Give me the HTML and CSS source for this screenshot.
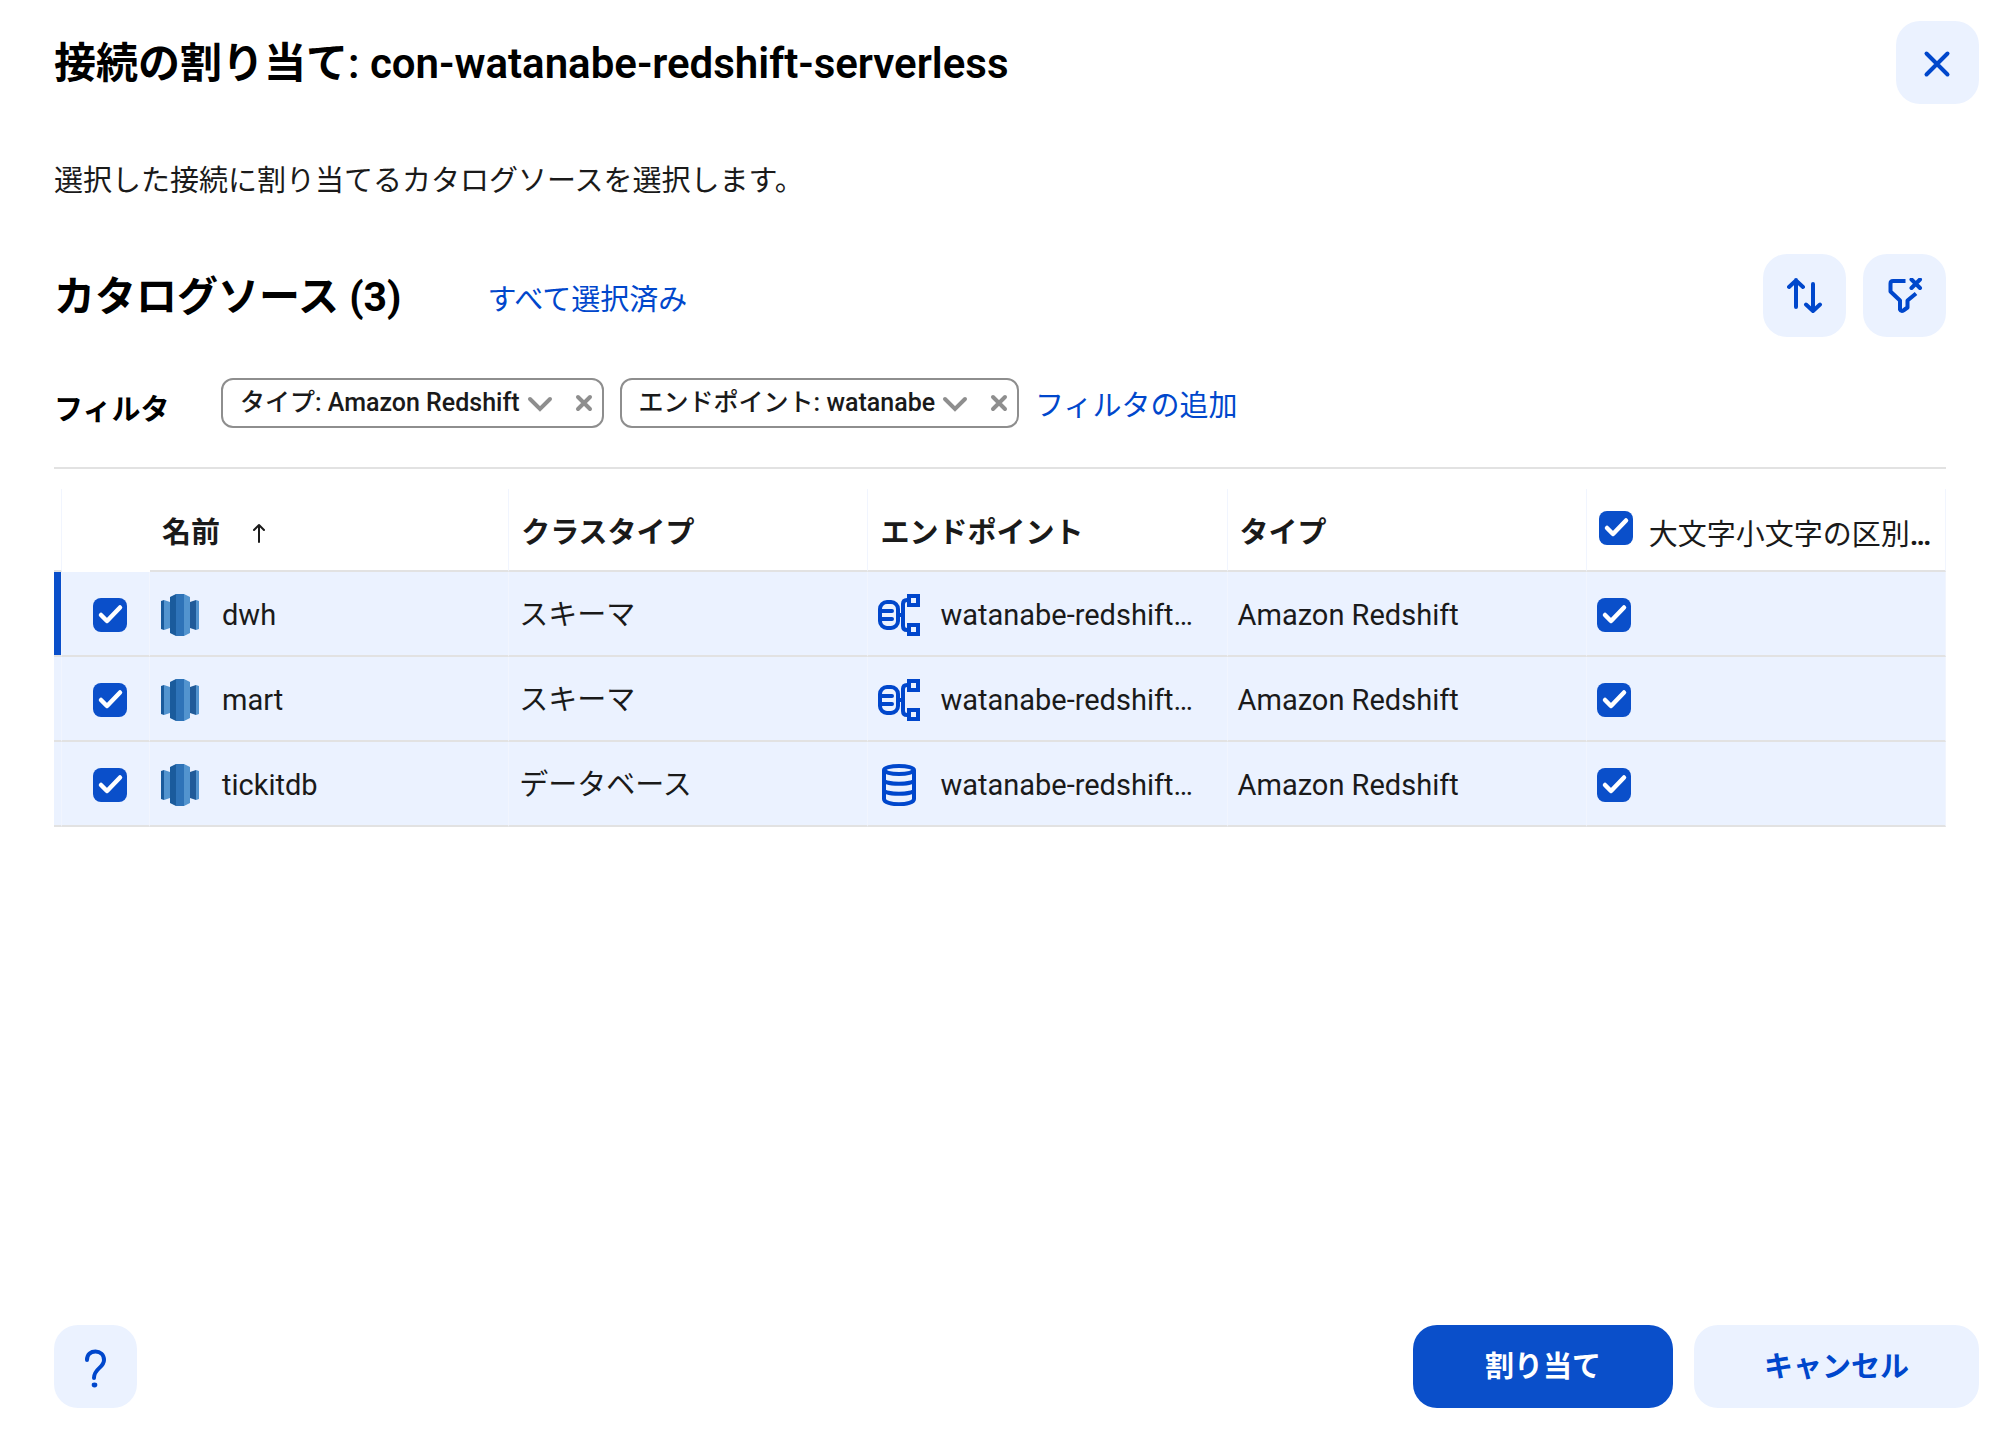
FILE: index.html
```html
<!DOCTYPE html>
<html lang="ja">
<head>
<meta charset="utf-8">
<meta name="viewport" content="width=device-width, initial-scale=1">
<title>接続の割り当て</title>
<link rel="stylesheet" href="styles.css">
</head>
<body>
<svg class="symbols" aria-hidden="true">
  <symbol id="redshift" viewBox="0 0 38 42">
    <path fill="#1a5b9c" d="M0 7l3-1v30l-3-1z"/>
    <path fill="#5294cf" d="M3 6l6 2v26l-6 2z"/>
    <path fill="#205b99" d="M35 6l-6 2v26l6 2z"/>
    <path fill="#5294cf" d="M35 6l3 1v28l-3 1z"/>
    <path fill="#1a5b9c" d="M9 3l6-3v42l-6-3z"/>
    <path fill="#2e73b8" d="M15 0h8v42h-8z"/>
    <path fill="#5294cf" d="M23 0l6 3v36l-6 3z"/>
  </symbol>
  <symbol id="schema" viewBox="0 0 42 42">
    <g fill="none" stroke="currentColor" stroke-width="4" stroke-linecap="round">
      <rect x="2" y="8" width="18" height="26" rx="7"/>
      <path d="M3 17h11M3 25h11M20 21h5M31 6h-2q-4 0-4 4v22q0 4 4 4h2"/>
      <path d="M31 2h9v9h-9zM31 31h9v9h-9z"/>
    </g>
  </symbol>
  <symbol id="database" viewBox="0 0 42 42">
    <g fill="none" stroke="currentColor" stroke-width="4">
      <ellipse cx="21" cy="6" rx="15" ry="4"/>
      <path d="M6 6v29c0 7 30 7 30 0V6M6 16c0 5 30 5 30 0M6 26c0 5 30 5 30 0"/>
    </g>
  </symbol>
</svg>

<main class="dialog">
  <header class="dialog-header">
    <h1 class="heading title">接続の割り当て: con-watanabe-redshift-serverless</h1>
    <button class="icon-button" type="button" aria-label="閉じる">
      <svg width="30" height="30" viewBox="0 0 30 30"><path d="M3.500 5.500l21 21M24.500 5.500l-21 21"/></svg>
    </button>
  </header>

  <div class="content">
    <p class="description">選択した接続に割り当てるカタログソースを選択します。</p>

    <div class="toolbar">
      <h2 class="heading">カタログソース (3)</h2>
      <a class="link" href="#">すべて選択済み</a>
      <div class="tools">
        <button class="icon-button" type="button" aria-label="並べ替え">
          <svg width="36" height="36" viewBox="0 0 36 36"><path d="M9 29V2M2 9l7-6.500L16 9M26 6v27M19 26.500L26 33l7-6.500"/></svg>
        </button>
        <button class="icon-button" type="button" aria-label="フィルタのクリア">
          <svg width="36" height="36" viewBox="0 0 36 36"><path class="butt" d="M18.500 3H6Q3.500 3 3.500 5.500v8L13 22.500v9q1 2.500 4 .5l3.500-2.500v-7l8.500-7"/><path d="M24.500 1.500l8.500 8.500M33 1.500L24.500 10"/></svg>
        </button>
      </div>
    </div>

    <div class="filters">
      <span class="filter-label">フィルタ</span>
      <div class="chip">
        <button class="chip-value" type="button">タイプ: Amazon Redshift
          <svg width="26" height="18" viewBox="0 0 26 18"><path d="M3 5l10 10L23 5"/></svg>
        </button>
        <button class="chip-remove" type="button" aria-label="削除">
          <svg width="18" height="18" viewBox="0 0 18 18"><path d="M3 3l12 12M15 3L3 15"/></svg>
        </button>
      </div>
      <div class="chip">
        <button class="chip-value" type="button">エンドポイント: watanabe
          <svg width="26" height="18" viewBox="0 0 26 18"><path d="M3 5l10 10L23 5"/></svg>
        </button>
        <button class="chip-remove" type="button" aria-label="削除">
          <svg width="18" height="18" viewBox="0 0 18 18"><path d="M3 3l12 12M15 3L3 15"/></svg>
        </button>
      </div>
      <a class="link" href="#">フィルタの追加</a>
    </div>

    <table class="sources">
      <colgroup><col class="col-mark"><col class="col-check"><col><col><col><col><col></colgroup>
      <thead>
        <tr>
          <th class="mark"></th>
          <th class="check"></th>
          <th scope="col"><div class="sorted">名前 <svg width="14" height="20" viewBox="0 0 14 20"><path d="M7 19V2M2 7l5-5 5 5"/></svg></div></th>
          <th scope="col">クラスタイプ</th>
          <th scope="col">エンドポイント</th>
          <th scope="col">タイプ</th>
          <th scope="col"><label class="case-label"><input class="checkbox" type="checkbox" checked><span>大文字小文字の区別<b>…</b></span></label></th>
        </tr>
      </thead>
      <tbody>
        <tr class="current">
          <td class="mark"></td>
          <td class="check"><input class="checkbox" type="checkbox" checked aria-label="dwh を選択"></td>
          <td><div class="item"><svg class="redshift"><use href="#redshift"/></svg>dwh</div></td>
          <td>スキーマ</td>
          <td><div class="item endpoint"><svg class="glyph"><use href="#schema"/></svg>watanabe-redshift…</div></td>
          <td>Amazon Redshift</td>
          <td><input class="checkbox" type="checkbox" checked aria-label="dwh の大文字小文字の区別"></td>
        </tr>
        <tr>
          <td class="mark"></td>
          <td class="check"><input class="checkbox" type="checkbox" checked aria-label="mart を選択"></td>
          <td><div class="item"><svg class="redshift"><use href="#redshift"/></svg>mart</div></td>
          <td>スキーマ</td>
          <td><div class="item endpoint"><svg class="glyph"><use href="#schema"/></svg>watanabe-redshift…</div></td>
          <td>Amazon Redshift</td>
          <td><input class="checkbox" type="checkbox" checked aria-label="mart の大文字小文字の区別"></td>
        </tr>
        <tr>
          <td class="mark"></td>
          <td class="check"><input class="checkbox" type="checkbox" checked aria-label="tickitdb を選択"></td>
          <td><div class="item"><svg class="redshift"><use href="#redshift"/></svg>tickitdb</div></td>
          <td>データベース</td>
          <td><div class="item endpoint"><svg class="glyph"><use href="#database"/></svg>watanabe-redshift…</div></td>
          <td>Amazon Redshift</td>
          <td><input class="checkbox" type="checkbox" checked aria-label="tickitdb の大文字小文字の区別"></td>
        </tr>
      </tbody>
    </table>
  </div>

  <footer class="dialog-footer">
    <button class="icon-button" type="button" aria-label="ヘルプ">
      <svg width="26" height="42" viewBox="0 0 26 42"><path d="M4 14C4 8 8 5.500 12.500 5.500 17 5.500 21 8.500 21 14c0 8-10 8-10 18"/><ellipse cx="11.500" cy="39" rx="2.800" ry="2.400"/></svg>
    </button>
    <div class="actions">
      <button class="button primary" type="button">割り当て</button>
      <button class="button" type="button">キャンセル</button>
    </div>
  </footer>
</main>
</body>
</html>
```
FILE: styles.css
```css
:root {
  --blue: #0047cc;
  --blue-fill: #0a4fca;
  --pale: #ebf2ff;
  --line: #e2e2e2;
  --ink: #1a1a1a;
  --gray: #8e8e8e;
}

* { box-sizing: border-box; }

body {
  margin: 0;
  background: #fff;
  color: var(--ink);
  font: 29px/40px Roboto, "Noto Sans CJK JP", sans-serif;
}

button { font: inherit; color: inherit; border: 0; background: none; padding: 0; cursor: pointer; }
svg { flex: none; display: block; }

.symbols { display: none; }

.dialog {
  min-height: 100vh;
  display: flex;
  flex-direction: column;
  padding: 21px 21px 24px 54px;
}

.dialog-header,
.dialog-footer {
  display: flex;
  align-items: center;
  justify-content: space-between;
}

.heading { margin: 0; padding-top: 3px; font-size: 41px; line-height: 60px; font-weight: 700; color: #000; }
.title { font-size: 42px; font-weight: 600; }

.icon-button {
  width: 83px;
  height: 83px;
  border-radius: 24px;
  background: var(--pale);
  color: var(--blue);
  display: flex;
  align-items: center;
  justify-content: center;
}
.icon-button path {
  fill: none;
  stroke: currentColor;
  stroke-width: 4;
  stroke-linecap: round;
  stroke-linejoin: round;
}
.icon-button .butt { stroke-linecap: butt; }
.icon-button ellipse { fill: currentColor; }

.content { flex: 1; padding-right: 33px; }

.description { margin: 57px 0 53px; }

.toolbar { display: flex; align-items: center; gap: 86px; }
.tools { margin-left: auto; display: flex; gap: 17px; }

.link { padding-top: 9px; color: var(--blue); text-decoration: none; }

.filters {
  display: flex;
  align-items: center;
  gap: 16px;
  padding: 41px 0 39px;
  border-bottom: 2px solid var(--line);
}
.filters .link { padding-top: 6px; }
.filter-label { width: 151px; padding-top: 14px; line-height: 36px; font-weight: 700; color: #000; }

.chip {
  height: 50px;
  display: flex;
  align-items: center;
  gap: 22px;
  padding: 0 9px 0 17px;
  border: 2px solid var(--gray);
  border-radius: 12px;
  font-size: 25px;
  font-weight: 500;
}
.chip-value { display: flex; align-items: center; gap: 7px; }
.chip path { fill: none; stroke: var(--gray); stroke-width: 4; stroke-linecap: round; }

.sources {
  width: 100%;
  margin-top: 20px;
  border-collapse: separate;
  border-spacing: 0;
  table-layout: fixed;
}
.col-mark { width: 8px; }
.col-check { width: 88px; }
.sources th,
.sources td {
  height: 85px;
  padding: 3px 12px 0 10px;
  text-align: left;
  vertical-align: middle;
  white-space: nowrap;
  border-bottom: 2px solid var(--line);
  border-right: 1px solid #f1f5fe;
}
.sources th { height: 83px; padding-top: 6px; padding-left: 12px; font-weight: 700; }
.sources td { background: var(--pale); }
.sources .mark { padding: 0; }
.sources .check { padding-left: 31px; }
.sources th.check { border-color: transparent; }
.sources .current .mark { background: var(--blue-fill); }

.sorted { display: flex; align-items: center; gap: 32px; }
.sorted path { fill: none; stroke: var(--ink); stroke-width: 2; stroke-linecap: round; stroke-linejoin: round; }

.item { display: flex; align-items: center; gap: 22px; }
.endpoint { gap: 20px; }
.redshift { width: 40px; height: 42px; }
.glyph { width: 42px; height: 42px; color: var(--blue); }

.case-label { display: flex; align-items: flex-start; gap: 16px; font-weight: 400; }
.case-label span { padding-top: 4px; }

.checkbox {
  appearance: none;
  flex: none;
  display: block;
  width: 34px;
  height: 34px;
  margin: 0;
  border-radius: 8px;
  background: var(--blue-fill) url("data:image/svg+xml,%3Csvg xmlns='http://www.w3.org/2000/svg' viewBox='0 0 34 34'%3E%3Cpath d='M8 17l6 6L27 9.500' fill='none' stroke='white' stroke-width='4.500' stroke-linecap='round' stroke-linejoin='round'/%3E%3C/svg%3E");
}

.actions { display: flex; gap: 21px; }
.button {
  min-width: 260px;
  height: 83px;
  padding: 0 70px;
  border-radius: 24px;
  background: var(--pale);
  color: var(--blue);
  font-weight: 700;
}
.primary { background: var(--blue-fill); color: #fff; }
```
